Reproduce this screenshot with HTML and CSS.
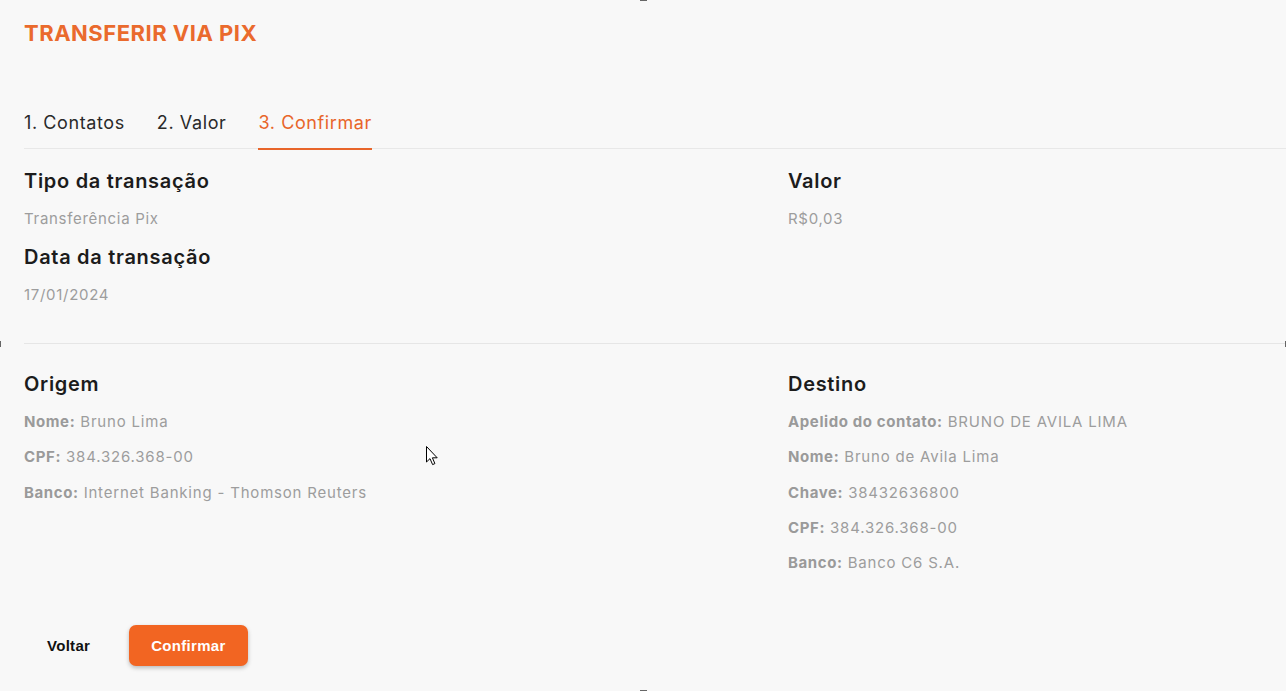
FILE: index.html
```html
<!DOCTYPE html>
<html lang="pt-BR">
<head>
<meta charset="utf-8">
<title>Transferir via Pix</title>
<link rel="stylesheet" href="styles.css">
</head>
<body>
<main class="page">
  <h1 class="title">TRANSFERIR VIA PIX</h1>
  <nav class="tabs">
    <span class="tab">1. Contatos</span>
    <span class="tab">2. Valor</span>
    <span class="tab active">3. Confirmar</span>
  </nav>

  <section class="grid summary">
    <div class="col">
      <h2 class="heading">Tipo da transação</h2>
      <p class="value">Transferência Pix</p>
      <h2 class="heading">Data da transação</h2>
      <p class="value">17/01/2024</p>
    </div>
    <div class="col">
      <h2 class="heading">Valor</h2>
      <p class="value">R$0,03</p>
    </div>
  </section>

  <section class="grid parties">
    <div class="col">
      <h2 class="heading">Origem</h2>
      <div class="rows">
        <p class="row"><b>Nome:</b> Bruno Lima</p>
        <p class="row"><b>CPF:</b> 384.326.368-00</p>
        <p class="row"><b>Banco:</b> Internet Banking - Thomson Reuters</p>
      </div>
    </div>
    <div class="col">
      <h2 class="heading">Destino</h2>
      <div class="rows">
        <p class="row"><b>Apelido do contato:</b> BRUNO DE AVILA LIMA</p>
        <p class="row"><b>Nome:</b> Bruno de Avila Lima</p>
        <p class="row"><b>Chave:</b> 38432636800</p>
        <p class="row"><b>CPF:</b> 384.326.368-00</p>
        <p class="row"><b>Banco:</b> Banco C6 S.A.</p>
      </div>
    </div>
  </section>

  <div class="actions">
    <button class="btn btn-text" type="button">Voltar</button>
    <button class="btn btn-primary" type="button">Confirmar</button>
  </div>
</main>
<svg class="cursor" width="13" height="20" viewBox="0 0 13 20" aria-hidden="true">
  <path d="M0.5 0.5 L0.5 16 L4 12.6 L6.6 18.6 L8.9 17.6 L6.4 11.8 L11.2 11.8 Z" fill="#fff" stroke="#000" stroke-width="1" stroke-linejoin="round"/>
</svg>
<span class="handle handle-top"></span>
<span class="handle handle-left"></span>
<span class="handle handle-right"></span>
<span class="handle handle-bottom"></span>
</body>
</html>
```

FILE: styles.css
```css
* { box-sizing: border-box; }

html, body {
  margin: 0;
  padding: 0;
  background: #f8f8f8;
  height: 100%;
  overflow: hidden;
}

body {
  font-family: Inter, "Open Sans", sans-serif;
  color: #222;
  position: relative;
}

.page {
  padding: 20px 0 0 24px;
}

.title {
  margin: 0;
  font-size: 22px;
  line-height: 26px;
  font-weight: 700;
  color: #ea6a2d;
  letter-spacing: 0.5px;
}

.tabs {
  display: flex;
  gap: 32px;
  margin-top: 65px;
  border-bottom: 1px solid #e8e8e8;
  height: 38px;
}

.tab {
  font-size: 18px;
  line-height: 24px;
  letter-spacing: 0.6px;
  color: #2a2a2a;
  padding-bottom: 13px;
  height: 39px;
}

.tab.active {
  color: #e8652a;
  border-bottom: 2px solid #e8652a;
}

.grid {
  display: grid;
  grid-template-columns: 764px 1fr;
}

.summary {
  padding-top: 20px;
  padding-bottom: 38px;
  border-bottom: 1px solid #e6e6e6;
}

.heading {
  margin: 0 0 16px;
  font-size: 20px;
  line-height: 24px;
  font-weight: 600;
  letter-spacing: 0.7px;
  color: #1c1c1c;
}

.value {
  margin: 0 0 16px;
  font-size: 15px;
  line-height: 20px;
  letter-spacing: 0.7px;
  color: #9d9d9d;
}

.value:last-child { margin-bottom: 0; }

.parties {
  padding-top: 28px;
}

.parties .heading { margin-bottom: 16px; }

.rows {
  display: flex;
  flex-direction: column;
  gap: 15.25px;
}

.row {
  margin: 0;
  font-size: 15px;
  line-height: 20px;
  letter-spacing: 0.8px;
  color: #9d9d9d;
}

.row b {
  font-weight: 700;
  color: #9a9a9a;
  letter-spacing: 0.6px;
}

.actions {
  display: flex;
  gap: 16px;
  margin-top: 52px;
}

.btn {
  font-family: "Liberation Sans", Arial, sans-serif;
  font-weight: 700;
  font-size: 15px;
  letter-spacing: 0.3px;
  height: 41px;
  padding: 0 23px;
  border: 0;
  border-radius: 7px;
  cursor: pointer;
}

.btn-text {
  background: transparent;
  color: #111;
}

.btn-primary {
  background: #f26522;
  color: #fff;
  padding: 0 22px;
  box-shadow: 0 2px 4px rgba(0, 0, 0, 0.25);
}

.cursor {
  position: absolute;
  left: 426px;
  top: 446px;
}

.handle {
  position: absolute;
  background: #666;
}

.handle-top { top: 0; left: 640px; width: 7px; height: 1px; }
.handle-bottom { bottom: 0; left: 640px; width: 7px; height: 1px; }
.handle-left { top: 341px; left: 0; width: 1px; height: 6px; }
.handle-right { top: 341px; right: 0; width: 1px; height: 6px; }
```
